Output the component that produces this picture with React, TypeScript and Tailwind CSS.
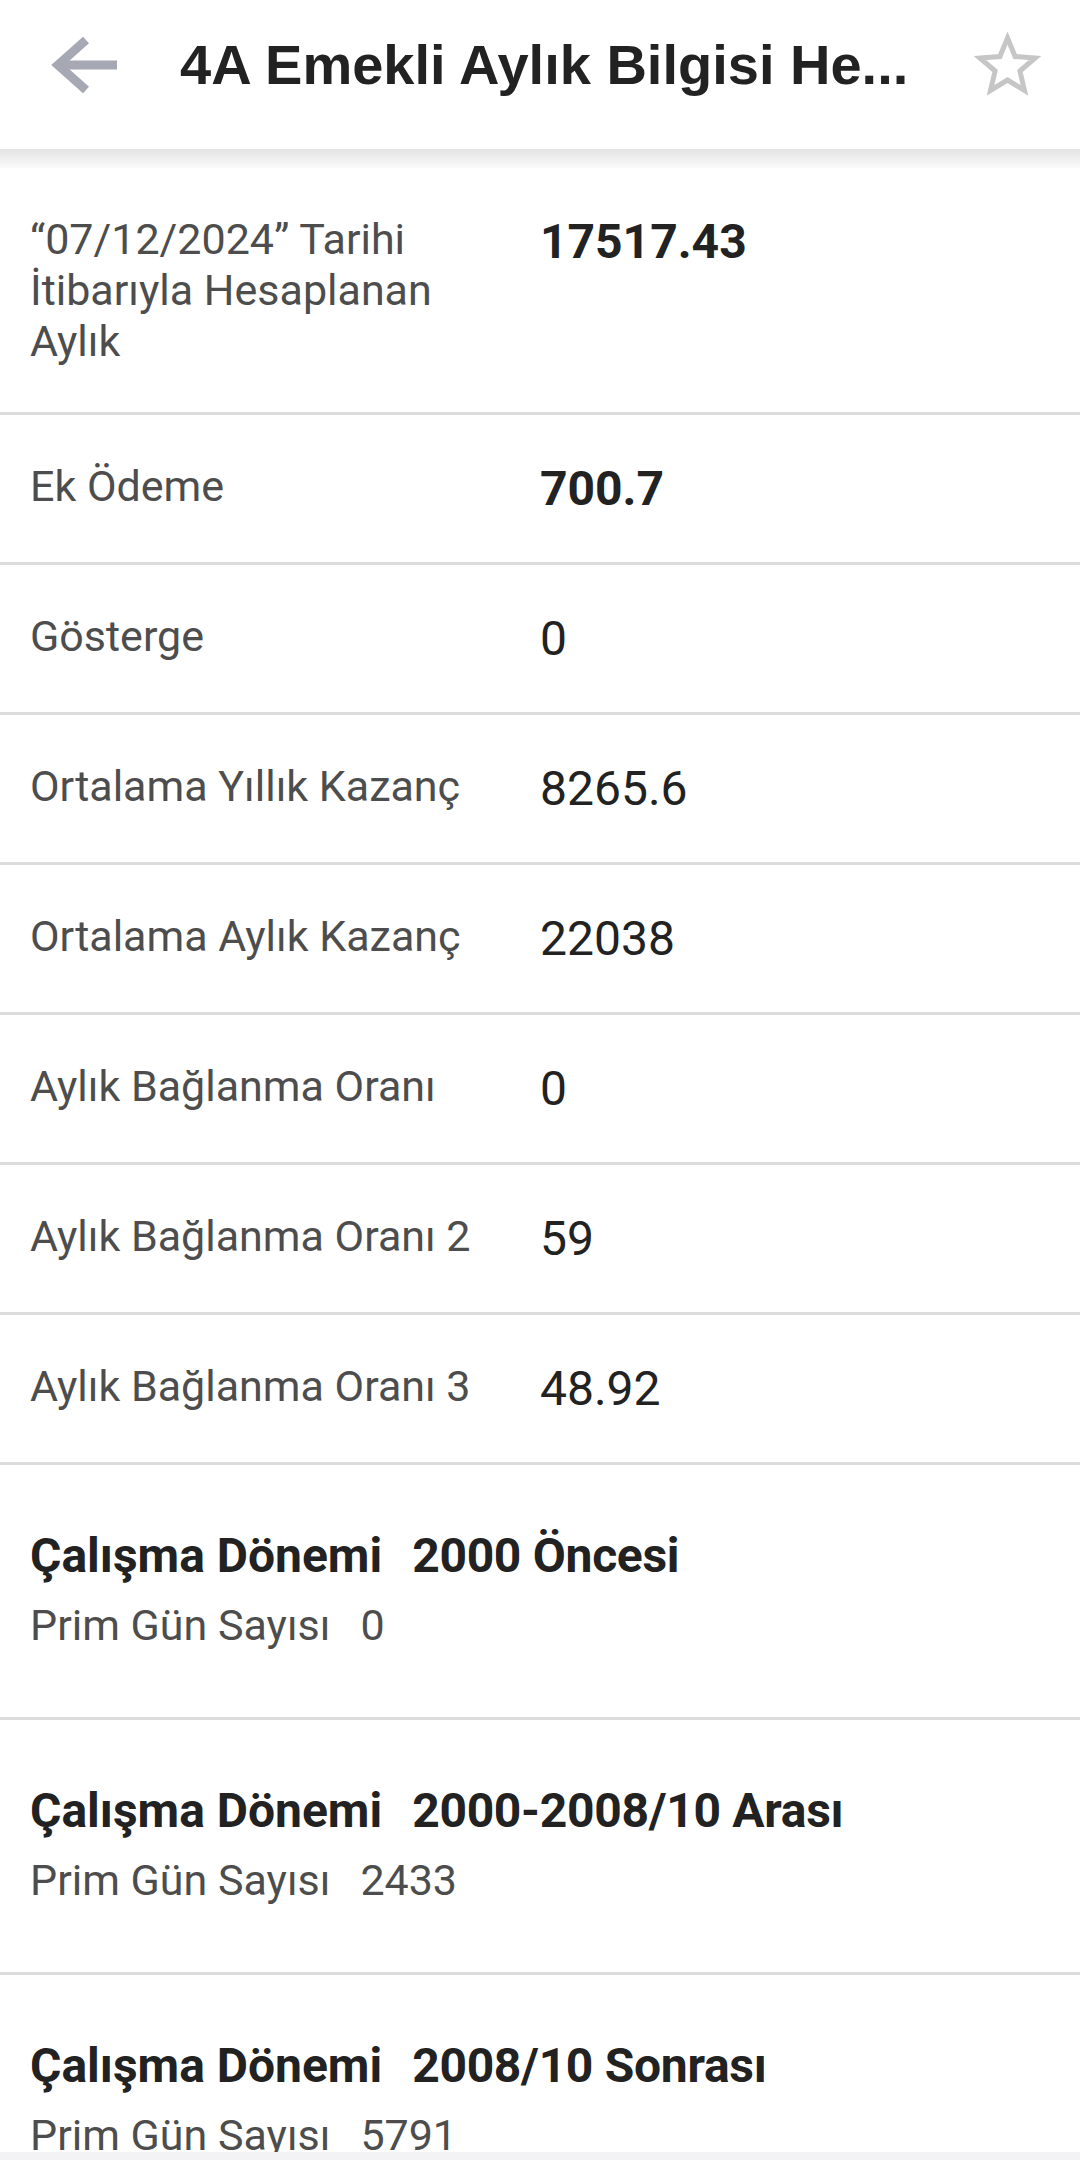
import React from "react";

const rows: { label: string; value: string; bold?: boolean }[] = [
  { label: "“07/12/2024” Tarihi İtibarıyla Hesaplanan Aylık", value: "17517.43", bold: true },
  { label: "Ek Ödeme", value: "700.7", bold: true },
  { label: "Gösterge", value: "0" },
  { label: "Ortalama Yıllık Kazanç", value: "8265.6" },
  { label: "Ortalama Aylık Kazanç", value: "22038" },
  { label: "Aylık Bağlanma Oranı", value: "0" },
  { label: "Aylık Bağlanma Oranı 2", value: "59" },
  { label: "Aylık Bağlanma Oranı 3", value: "48.92" },
];

const periods = [
  { name: "2000 Öncesi", days: "0" },
  { name: "2000-2008/10 Arası", days: "2433" },
  { name: "2008/10 Sonrası", days: "5791" },
];

const roboto = { fontFamily: "Roboto, 'Noto Sans', sans-serif" };

function Divider() {
  return <div className="h-[3px] w-full bg-[#dcdcdc]" />;
}

export default function App() {
  return (
    <div className="w-[1080px] h-[2160px] overflow-hidden bg-white flex flex-col">
      <div className="flex-1 overflow-hidden flex flex-col">
        {/* Header */}
        <div className="h-[149px] pb-[19px] flex flex-col bg-white shrink-0">
          <div className="h-[130px] flex items-center">
            <svg className="ml-[48px] shrink-0" width="74" height="66" viewBox="48 32 74 66">
              <polyline points="86,40 58,65 86,90" fill="none" stroke="#a6a8b4" strokeWidth="9" strokeLinejoin="miter" />
              <line x1="60" y1="65" x2="117" y2="65" stroke="#a6a8b4" strokeWidth="9" />
            </svg>
            <div
              className="ml-[58px] text-[56px] leading-[64px] font-bold text-[#222222] whitespace-nowrap"
              style={{ fontFamily: "'Liberation Sans', Arial, sans-serif" }}
            >
              4A Emekli Aylık Bilgisi He...
            </div>
            <svg className="ml-auto mr-[34px] shrink-0" width="76" height="70" viewBox="970 30 76 70">
              <polygon
                points="1007.5,38 1015.1,56.5 1035.1,58 1019.9,71 1024.5,90.5 1007.5,80 990.5,90.5 995.1,71 979.9,58 999.9,56.5"
                fill="none"
                stroke="#c6c6c6"
                strokeWidth="5"
                strokeLinejoin="miter"
              />
            </svg>
          </div>
        </div>
        <div className="h-[19px] shrink-0 bg-gradient-to-b from-[#e3e3e3] to-[#fbfbfb]" />
        <Divider />

        {/* Rows */}
        {rows.map((r, i) => (
          <div key={i} className="shrink-0">
            <div className="flex items-start pt-[46px] pb-[45px]" style={roboto}>
              <div className="pl-[30px] w-[510px] shrink-0 text-[43px] leading-[51px] text-[#4d4d4d]">
                {i === 0 ? (
                  <>
                    “07/12/2024” Tarihi
                    <br />
                    İtibarıyla Hesaplanan
                    <br />
                    Aylık
                  </>
                ) : (
                  r.label
                )}
              </div>
              <div
                className={
                  r.bold
                    ? "ml-[30px] text-[48px] leading-[56px] font-bold text-[#222222]"
                    : "ml-[30px] text-[48px] leading-[56px] text-[#222222]"
                }
              >
                {r.value}
              </div>
            </div>
            <Divider />
          </div>
        ))}

        {/* Work periods */}
        {periods.map((p, i) => (
          <div key={i} className="shrink-0">
            <div className="pl-[30px] pt-[63px] pb-[66px] flex flex-col gap-[16px]" style={roboto}>
              <div className="text-[48px] leading-[56px] font-bold text-[#222222] whitespace-nowrap">
                <span>Çalışma Dönemi</span>
                <span className="ml-[30px] tracking-[-0.3px]">{p.name}</span>
              </div>
              <div className="text-[43px] leading-[51px] text-[#4d4d4d] whitespace-nowrap">
                <span>Prim Gün Sayısı</span>
                <span className="ml-[30px]">{p.days}</span>
              </div>
            </div>
            <Divider />
          </div>
        ))}
      </div>
      <div className="h-[8px] shrink-0 bg-[#f3f3f5]" />
    </div>
  );
}
